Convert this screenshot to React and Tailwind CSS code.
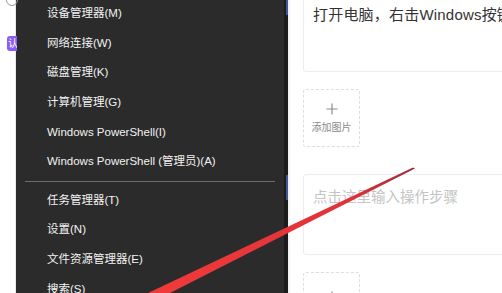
import React from "react";

const menuTop = [
  "设备管理器(M)",
  "网络连接(W)",
  "磁盘管理(K)",
  "计算机管理(G)",
  "Windows PowerShell(I)",
  "Windows PowerShell (管理员)(A)",
];

const menuBottom = ["任务管理器(T)", "设置(N)", "文件资源管理器(E)", "搜索(S)"];

const MenuItem = ({ label }) => (
  <div className="h-[29.6px] flex items-center pl-[31px] text-[11.5px] text-[#f2f2f2] whitespace-nowrap">
    {label}
  </div>
);

const AddImage = ({ label }) => (
  <div className="w-[57px] h-[58px] shrink-0 border border-dashed border-[#dedede] rounded-[3px] flex flex-col items-center justify-center text-[#8a8a8a]">
    <svg width="12" height="12" viewBox="0 0 12 12" className="mb-[8px]">
      <path d="M6 0.5V11.5M0.5 6H11.5" stroke="#8a8a8a" strokeWidth="1.2" />
    </svg>
    {label && <span className="text-[10px] leading-none">{label}</span>}
  </div>
);

export default function App() {
  return (
    <div
      className="relative w-[502px] h-[293px] overflow-hidden flex bg-white"
      style={{ fontFamily: '"Segoe UI", "Liberation Sans", "Noto Sans CJK SC", sans-serif' }}
    >
      {/* left strip of the page behind */}
      <div className="w-[16px] shrink-0 relative bg-white border-r border-[#e8e8e8]">
        <div className="absolute left-[6px] top-[-6px] w-[12px] h-[12px] rounded-full border border-[#999]" />
        <div className="absolute left-[7px] top-[36px] w-[10px] h-[15px] rounded-l-[3px] bg-[#8b5cf6] text-white text-[10px] leading-[15px] pl-[1px] overflow-hidden">
          认
        </div>
      </div>

      {/* context menu */}
      <div className="w-[268px] shrink-0 bg-[#2b2b2b] -mt-[1px]">
        {menuTop.map((m) => (
          <MenuItem key={m} label={m} />
        ))}
        <div className="h-[9px] flex items-center px-[9px]">
          <div className="h-px w-full bg-[#6e6e6e]" />
        </div>
        {menuBottom.map((m) => (
          <MenuItem key={m} label={m} />
        ))}
      </div>

      {/* dark window edge */}
      <div className="w-[4px] shrink-0 bg-[#1c1c1c] flex flex-col items-end">
        <div className="w-[2px] h-[15px] bg-[#3d5a94]" />
        <div className="w-[2px] h-[25px] mt-[160px] bg-[#3d5a94]" />
      </div>

      {/* editor panel */}
      <div className="flex-1 min-w-0 pl-[15px] bg-gradient-to-r from-[#ececec] via-white to-white bg-no-repeat" style={{ backgroundSize: "6px 100%" }}>
        <div className="w-[240px] h-[80px] -mt-[8px] border border-[#ececec] rounded-[3px] pl-[9px] pt-[11px] text-[15px] tracking-[0.2px] text-[#333] whitespace-nowrap">
          打开电脑，右击Windows按键
        </div>
        <div className="mt-[17px]">
          <AddImage label="添加图片" />
        </div>
        <div className="w-[240px] h-[81px] mt-[27px] border border-[#ececec] rounded-[3px] pl-[9px] pt-[12px] text-[14.5px] text-[#c4c4c4] whitespace-nowrap">
          点击这里输入操作步骤
        </div>
        <div className="mt-[17px]">
          <AddImage />
        </div>
      </div>

      {/* red annotation arrow */}
      <svg className="absolute left-0 top-0 pointer-events-none" width="502" height="293" viewBox="0 0 502 293">
        <defs>
          <linearGradient id="arr" x1="414" y1="168" x2="160" y2="293" gradientUnits="userSpaceOnUse">
            <stop offset="0" stopColor="#9c2a3a" />
            <stop offset="0.25" stopColor="#e0323a" />
            <stop offset="1" stopColor="#f03a3a" />
          </linearGradient>
        </defs>
        <polygon points="413,167.5 415,168.5 170,293 148,293" fill="url(#arr)" />
      </svg>
    </div>
  );
}
